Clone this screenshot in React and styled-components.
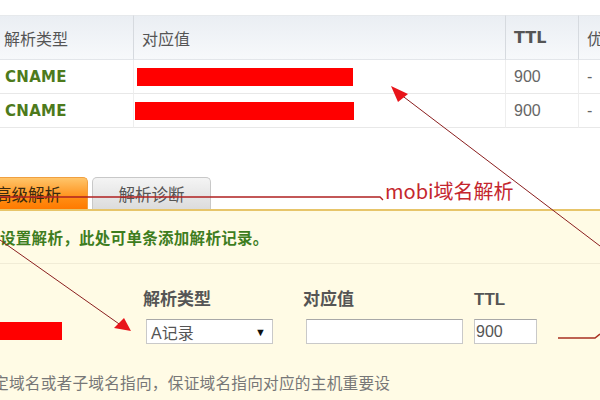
import React from 'react'
import styled, { createGlobalStyle } from 'styled-components'

const Global = createGlobalStyle`
  html, body {
    margin: 0;
    padding: 0;
    background: #fff;
  }
  body {
    font-family: "Liberation Sans", "Noto Sans CJK SC", sans-serif;
  }
`

const Page = styled.div`
  position: relative;
  width: 600px;
  height: 400px;
  overflow: hidden;
  background: #fff;
`

const Table = styled.div`
  margin-top: 15px;
  display: grid;
  grid-template-columns: 133px 372px 73px 1fr;
`

const HeadCell = styled.div`
  height: 43px;
  display: flex;
  align-items: center;
  overflow: hidden;
  white-space: nowrap;
  padding-left: ${p => p.$pad ?? 8}px;
  background: linear-gradient(#eaeef3, #f7f9fb);
  border-top: 1px solid #e6e9ec;
  border-bottom: 1px solid #e3e6ea;
  border-left: ${p => (p.$first ? 'none' : '1px solid #d6dadf')};
  color: #555;
  font-size: 16px;
  font-weight: ${p => (p.$bold ? 700 : 400)};
  font-family: ${p => (p.$bold ? '"DejaVu Sans", sans-serif' : 'inherit')};
`

const Cell = styled.div`
  height: 33px;
  display: flex;
  align-items: center;
  padding-left: ${p => p.$pad ?? 8}px;
  border-bottom: 1px solid #e8e8e8;
  border-left: ${p => (p.$first ? 'none' : '1px solid #eeeeee')};
  color: #666;
  font-size: 16px;
`

const TypeText = styled.span`
  color: #4d7a1c;
  font-weight: 700;
  font-family: "DejaVu Sans", sans-serif;
  font-size: 15px;
  letter-spacing: 0.3px;
`

const Redact = styled.div`
  width: ${p => p.$w}px;
  height: ${p => p.$h || 18}px;
  margin-left: ${p => p.$ml || 0}px;
  margin-bottom: ${p => p.$mb || 0}px;
  background: #f00;
`

const TabBar = styled.div`
  margin-top: 48px;
  height: 33px;
  display: flex;
  align-items: flex-end;
  gap: 4px;
`

const Tab = styled.div`
  height: 32px;
  box-sizing: border-box;
  width: ${p => p.$w}px;
  margin-left: ${p => p.$ml || 0}px;
  display: flex;
  align-items: center;
  justify-content: center;
  border-radius: 5px 5px 0 0;
  font-size: 16.5px;
  color: ${p => (p.$active ? '#3a2a10' : '#555')};
  background: ${p =>
    p.$active
      ? 'linear-gradient(#ffc56a, #ff8a10 70%, #ff7a00)'
      : 'linear-gradient(#f4f4f4, #dcdcdc)'};
  border: 1px solid ${p => (p.$active ? '#f0a040' : '#c8c8c8')};
  border-bottom: none;
`

const Panel = styled.div`
  background: #fffbe5;
  border-top: 2px solid #e7c56a;
  height: 200px;
`

const Notice = styled.div`
  height: 52px;
  display: flex;
  align-items: center;
  border-bottom: 1px solid #f1ecd6;
  color: #3e7d1e;
  font-weight: 700;
  font-size: 15.5px;
  letter-spacing: 0.3px;
`

const FormRow = styled.div`
  display: flex;
  align-items: flex-end;
  margin-top: 26px;
`

const Field = styled.div`
  display: flex;
  flex-direction: column;
  gap: 9px;
  margin-left: ${p => p.$ml || 0}px;
`

const Label = styled.div`
  color: #555;
  font-weight: 700;
  font-size: 17px;
  height: 20px;
  line-height: 20px;
  margin-left: ${p => p.$ml || 0}px;
`

const Box = styled.div`
  width: ${p => p.$w}px;
  height: 25px;
  box-sizing: border-box;
  background: #fff;
  border: 1px solid #c9c9c9;
  border-top-color: #a8a8a8;
  display: flex;
  align-items: center;
  justify-content: space-between;
  padding: 0 6px 0 ${p => p.$pl ?? 4}px;
  color: #555;
  font-size: 16px;
`

const Caret = styled.span`
  font-size: 11px;
  color: #111;
`

const Hint = styled.div`
  margin-top: 27px;
  margin-left: -7px;
  color: #777;
  font-size: 15.7px;
  letter-spacing: 0.2px;
  white-space: nowrap;
`

const Overlay = styled.svg`
  position: absolute;
  left: 0;
  top: 0;
  pointer-events: none;
`

const Note = styled.div`
  position: absolute;
  left: 385px;
  top: 178px;
  color: #c4262e;
  font-size: 20px;
  font-family: "Noto Sans CJK SC", sans-serif;
  line-height: 26px;
`

const rows = [
  { w: 216, ml: 3 },
  { w: 219, ml: 1 },
]

export default function App() {
  return (
    <Page>
      <Global />
      <Table>
        <HeadCell $first $pad={4}>解析类型</HeadCell>
        <HeadCell>对应值</HeadCell>
        <HeadCell $bold>TTL</HeadCell>
        <HeadCell>优先</HeadCell>
        {rows.map((r, i) => (
          <React.Fragment key={i}>
            <Cell $first $pad={5}><TypeText>CNAME</TypeText></Cell>
            <Cell $pad={0}><Redact $w={r.w} $ml={r.ml} /></Cell>
            <Cell>900</Cell>
            <Cell>-</Cell>
          </React.Fragment>
        ))}
      </Table>

      <TabBar>
        <Tab $active $w={120} $ml={-32}>高级解析</Tab>
        <Tab $w={119}>解析诊断</Tab>
      </TabBar>

      <Panel>
        <Notice>设置解析，此处可单条添加解析记录。</Notice>
        <FormRow>
          <Redact $w={62} $h={18} $mb={4} />
          <Field $ml={84}>
            <Label $ml={-3}>解析类型</Label>
            <Box $w={127}>A记录<Caret>▼</Caret></Box>
          </Field>
          <Field $ml={33}>
            <Label $ml={-3}>对应值</Label>
            <Box $w={157} />
          </Field>
          <Field $ml={11}>
            <Label>TTL</Label>
            <Box $w={63} $pl={1}>900</Box>
          </Field>
        </FormRow>
        <Hint>定域名或者子域名指向，保证域名指向对应的主机重要设</Hint>
      </Panel>

      <Note>mobi域名解析</Note>
      <Overlay width="600" height="400" viewBox="0 0 600 400">
        <g stroke="#8a1e1e" strokeWidth="1" fill="none">
          <line x1="600" y1="246" x2="396" y2="91" />
          <line x1="0" y1="240" x2="122" y2="326" />
          <polyline points="0,197 380,197 383,200" stroke="#b02020" strokeWidth="1.4" />
          <polyline points="558,338 595,338 600,334" stroke="#a83020" strokeWidth="1.6" />
        </g>
        <polygon points="391,86 408,94 398,102" fill="#e8141a" />
        <polygon points="131,331 114,328 124,318" fill="#e8141a" />
      </Overlay>
    </Page>
  )
}
